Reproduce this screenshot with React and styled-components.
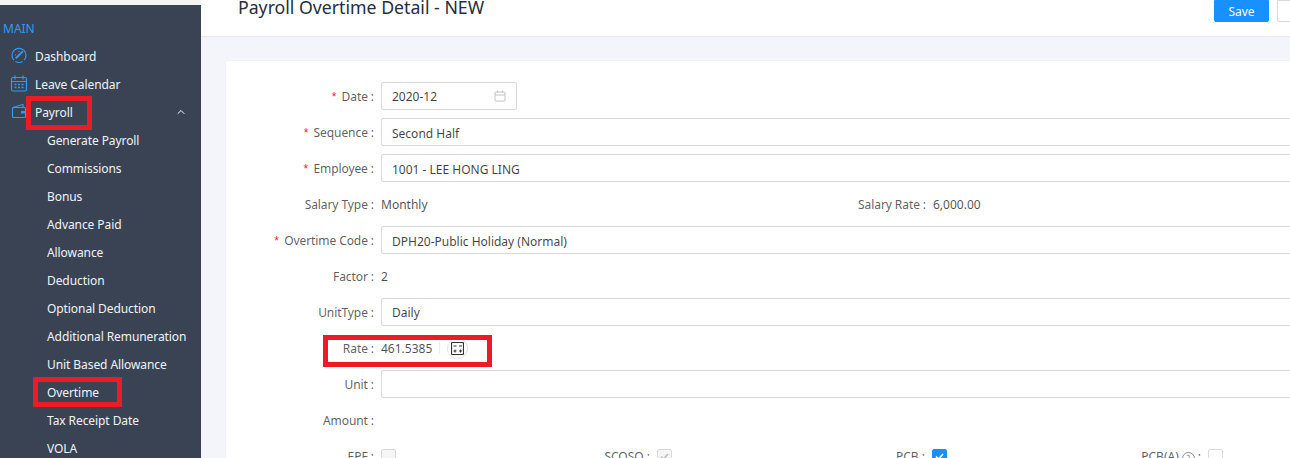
import React from 'react';
import styled, { createGlobalStyle } from 'styled-components';
import { ChevronUp } from 'lucide-react';

const GlobalStyle = createGlobalStyle`
    html, body {
        margin: 0;
        padding: 0;
        overflow: hidden;
    }
    body {
        font-family: "Noto Sans", "Open Sans", sans-serif;
        font-size: 12px;
        color: rgba(0, 0, 0, 0.65);
    }
`

const Page = styled.div`
    display: flex;
    width: 1290px;
    height: 458px;
    overflow: hidden;
    position: relative;
    background: #f4f5fa;
`

const Sidebar = styled.div`
    width: 201px;
    flex: none;
    display: flex;
    flex-direction: column;
    background: #f4f4f4;
    overflow: hidden;
`

const SideInner = styled.div`
    flex: 1;
    margin-top: 5px;
    background: #3a4354;
    padding-top: 14px;
    color: #f0f3f7;
    position: relative;
`

const SideTitle = styled.div`
    height: 19px;
    line-height: 19px;
    padding-left: 3px;
    color: #2a9df4;
    font-size: 12px;
    margin-bottom: 4px;
`

const SideRow = styled.div`
    height: 28px;
    display: flex;
    align-items: center;
    padding-left: ${props => (props.$sub ? '47px' : '35px')};
    position: relative;
    font-size: 12px;
    letter-spacing: -0.08px;
    white-space: nowrap;
`

const SideIcon = styled.svg`
    position: absolute;
    left: 10px;
    top: 4px;
    width: 20px;
    height: 20px;
    fill: none;
    stroke: #2a9df4;
    stroke-width: 1.2;
`

const Arrow = styled(ChevronUp)`
    position: absolute;
    right: 14px;
    top: 8px;
    color: #fff;
`

const Main = styled.div`
    flex: 1;
    min-width: 0;
    display: flex;
    flex-direction: column;
`

const Header = styled.div`
    height: 36px;
    flex: none;
    background: #fff;
    border-bottom: 1px solid #f0e4e6;
    display: flex;
    justify-content: space-between;
    padding-left: 37px;
    overflow: hidden;
`

const Title = styled.div`
    font-size: 17.7px;
    line-height: 14px;
    color: #262f3d;
    font-weight: 400;
    white-space: nowrap;
`

const Actions = styled.div`
    display: flex;
    gap: 8px;
    align-items: flex-start;
    margin-right: -14px;
`

const Button = styled.button`
    width: ${props => (props.$primary ? '55px' : '27px')};
    height: 22px;
    padding: 0;
    border-radius: 0 0 2px 2px;
    border: 1px solid ${props => (props.$primary ? '#1890ff' : '#d9d9d9')};
    background: ${props => (props.$primary ? '#1890ff' : '#fff')};
    color: #fff;
    font-family: inherit;
    font-size: 12px;
`

const Content = styled.div`
    flex: 1;
    padding: 23px 0 0 24px;
`

const Card = styled.div`
    background: #fff;
    border: 1px solid #f1f1f3;
    border-right: none;
    padding: 21px 0 0 0;
    height: 400px;
    overflow: hidden;
`

const Row = styled.div`
    display: flex;
    align-items: center;
    height: 28px;
    margin-bottom: 8px;
`

const Label = styled.label`
    width: 148px;
    flex: none;
    text-align: right;
    padding-right: 7px;
    white-space: nowrap;
    font-size: 12px;
    letter-spacing: -0.08px;
    color: rgba(0, 0, 0, 0.65);
`

const Star = styled.span`
    color: #f5222d;
    margin-right: 4px;
    font-family: "Liberation Mono", monospace;
`

const Input = styled.div`
    box-sizing: border-box;
    width: ${props => props.$width || '930px'};
    height: 28px;
    flex: none;
    border: 1px solid #d9d9d9;
    border-radius: 2px;
    padding: ${props => (props.$low ? '2px' : '0')} 10px 0;
    display: flex;
    align-items: center;
    justify-content: space-between;
    color: rgba(0, 0, 0, 0.75);
    background: #fff;
`

const Value = styled.span`
    color: rgba(0, 0, 0, 0.7);
    white-space: nowrap;
`

const Half = styled.div`
    display: flex;
    align-items: center;
    width: ${props => props.$width};
    flex: none;
`

const WideLabel = styled(Label)`
    width: 101px;
`

const Divider = styled.span`
    width: 1px;
    height: 12px;
    margin-left: 7px;
    background: #efefef;
`

const CalcButton = styled.span`
    box-sizing: border-box;
    width: 21px;
    height: 21px;
    margin-left: 7px;
    border: 1px solid #e2e2e2;
    border-radius: 50%;
    display: flex;
    align-items: center;
    justify-content: center;
`

const CheckCell = styled.div`
    display: flex;
    align-items: center;
    justify-content: flex-end;
    width: ${props => props.$width};
    flex: none;
    gap: 7px;
`

const Help = styled.span`
    box-sizing: border-box;
    display: inline-block;
    width: 13px;
    height: 13px;
    margin: 0 3px 0 3px;
    border: 1px solid #8c8c8c;
    border-radius: 50%;
    color: #8c8c8c;
    font-size: 9px;
    line-height: 11px;
    text-align: center;
    vertical-align: -1px;
`

const Box = styled.span`
    box-sizing: border-box;
    width: 15px;
    height: 15px;
    border-radius: 2px;
    border: 1px solid ${props => (props.$on ? '#1890ff' : '#d9d9d9')};
    background: ${props => (props.$on ? '#1890ff' : props.$off ? '#f5f5f5' : '#fff')};
    display: flex;
    align-items: center;
    justify-content: center;
`

const Marker = styled.div`
    position: absolute;
    box-sizing: border-box;
    border: 5px solid #ed1c24;
    left: ${props => props.$x}px;
    top: ${props => props.$y}px;
    width: ${props => props.$w}px;
    height: ${props => props.$h}px;
`

const subItems = [
    'Generate Payroll',
    'Commissions',
    'Bonus',
    'Advance Paid',
    'Allowance',
    'Deduction',
    'Optional Deduction',
    'Additional Remuneration',
    'Unit Based Allowance',
    'Overtime',
    'Tax Receipt Date',
    'VOLA',
]

const Check = ({ color }) => (
    <svg width="11" height="11" viewBox="0 0 11 11" fill="none" stroke={color} strokeWidth="1.6">
        <path d="M2 5.5 4.6 8 9 3" />
    </svg>
)

const App = () => {
    return (
        <Page>
            <GlobalStyle />
            <Sidebar>
                <SideInner>
                    <SideTitle>MAIN</SideTitle>
                    <SideRow>
                        <SideIcon viewBox="0 0 20 20">
                            <path d="M4 14.2A7 7 0 1 1 14 14.2" />
                            <path d="M5.5 15.5A7 7 0 0 0 12.5 15.5" />
                            <path d="M5.8 12.2 12.8 5.4" strokeWidth="2" />
                            <path d="M9 5v1M5 9h1" />
                        </SideIcon>
                        Dashboard
                    </SideRow>
                    <SideRow>
                        <SideIcon viewBox="0 0 20 20">
                            <rect x="1.5" y="3.5" width="15" height="13.5" rx="1.5" />
                            <path d="M1.5 7.5h15M5 1.5v4M13 1.5v4" />
                            <path d="M4.5 10.5h2M8 10.5h2M11.5 10.5h2M4.5 13.5h2M8 13.5h2M11.5 13.5h2" strokeWidth="1.4" />
                        </SideIcon>
                        Leave Calendar
                    </SideRow>
                    <SideRow>
                        <SideIcon viewBox="0 0 20 20">
                            <path d="M2.5 5.5 13 2.5v3" />
                            <path d="M2.5 6.5a1 1 0 0 1 1-1h11a1 1 0 0 1 1 1v8a1 1 0 0 1-1 1h-11a1 1 0 0 1-1-1z" />
                            <path d="M11 9h5v2.5h-5z" fill="#2a9df4" stroke="none" />
                        </SideIcon>
                        Payroll
                        <Arrow size={12} strokeWidth={2} />
                    </SideRow>
                    {subItems.map(item => (
                        <SideRow $sub key={item}>{item}</SideRow>
                    ))}
                </SideInner>
            </Sidebar>
            <Main>
                <Header>
                    <Title>Payroll Overtime Detail - NEW</Title>
                    <Actions>
                        <Button $primary>Save</Button>
                        <Button />
                    </Actions>
                </Header>
                <Content>
                    <Card>
                        <Row>
                            <Label><Star>*</Star>Date :</Label>
                            <Input $width="136px">
                                2020-12
                                <svg width="12" height="12" viewBox="0 0 12 12" fill="none" stroke="#c4c4c4">
                                    <rect x="1" y="2" width="10" height="9" rx="1" />
                                    <path d="M1 5h10M3.5 .5v2.5M8.5 .5v2.5" />
                                </svg>
                            </Input>
                        </Row>
                        <Row>
                            <Label><Star>*</Star>Sequence :</Label>
                            <Input $low>Second Half</Input>
                        </Row>
                        <Row>
                            <Label><Star>*</Star>Employee :</Label>
                            <Input $low>1001 - LEE HONG LING</Input>
                        </Row>
                        <Row>
                            <Half $width="599px">
                                <Label>Salary Type :</Label>
                                <Value>Monthly</Value>
                            </Half>
                            <WideLabel>Salary Rate :</WideLabel>
                            <Value>6,000.00</Value>
                        </Row>
                        <Row>
                            <Label><Star>*</Star>Overtime Code :</Label>
                            <Input $low>DPH20-Public Holiday (Normal)</Input>
                        </Row>
                        <Row>
                            <Label>Factor :</Label>
                            <Value>2</Value>
                        </Row>
                        <Row>
                            <Label>UnitType :</Label>
                            <Input>Daily</Input>
                        </Row>
                        <Row>
                            <Label>Rate :</Label>
                            <Value>461.5385</Value>
                            <Divider />
                            <CalcButton>
                                <svg width="13" height="13" viewBox="0 0 13 13" fill="none" stroke="#333">
                                    <rect x="0.5" y="0.5" width="12" height="12" rx="1" strokeWidth="1.2" />
                                    <path d="M2.5 4h3M8 4h3M2.5 9h3M8 9h3M4 7.5v3M9.5 7.5v3" strokeWidth="1" />
                                </svg>
                            </CalcButton>
                        </Row>
                        <Row>
                            <Label>Unit :</Label>
                            <Input />
                        </Row>
                        <Row>
                            <Label>Amount :</Label>
                        </Row>
                        <Row>
                            <CheckCell $width="170px">EPF :<Box $off /></CheckCell>
                            <CheckCell $width="276px">SCOSO :<Box $off><Check color="#bdbdbd" /></Box></CheckCell>
                            <CheckCell $width="275px">PCB :<Box $on><Check color="#fff" /></Box></CheckCell>
                            <CheckCell $width="276px">
                                <span>PCB(A)<Help>?</Help>:</span>
                                <Box />
                            </CheckCell>
                        </Row>
                    </Card>
                </Content>
            </Main>
            <Marker $x={26} $y={96} $w={66} $h={34} />
            <Marker $x={33} $y={377} $w={89} $h={30} />
            <Marker $x={323} $y={335} $w={169} $h={32} />
        </Page>
    )
}

export default App;
